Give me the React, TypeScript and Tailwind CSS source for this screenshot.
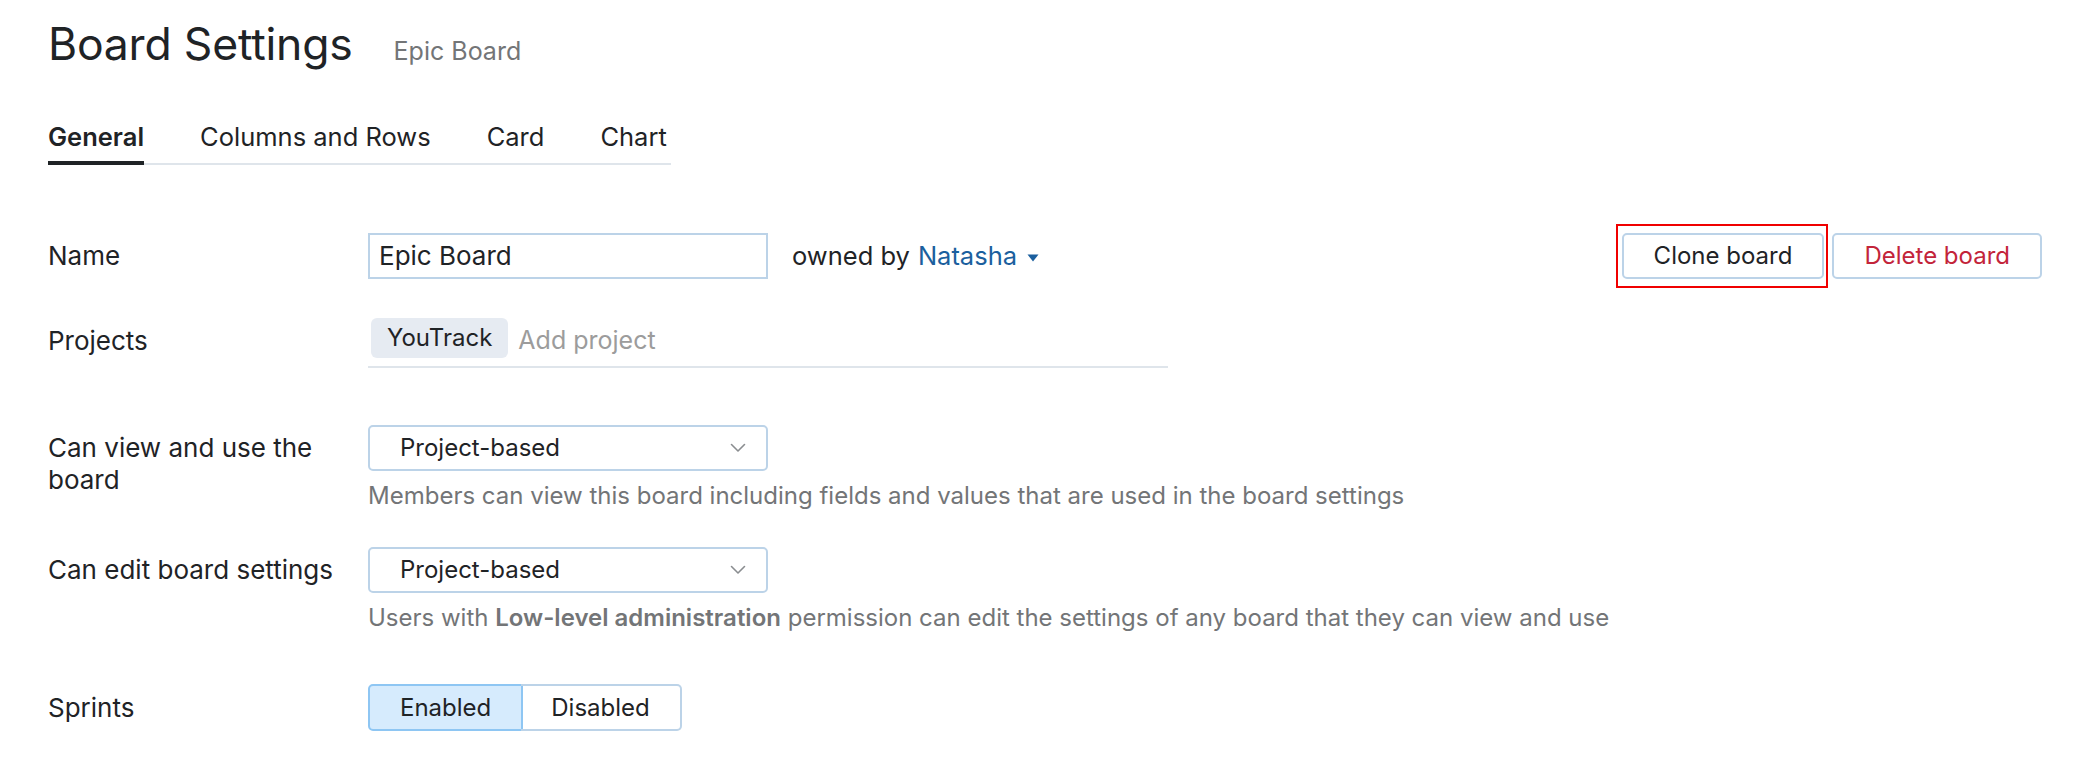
import React from "react";

const Chevron = () => (
  <svg width="16" height="10" viewBox="0 0 16 10" fill="none" className="shrink-0">
    <path d="M1.5 1.5 L8 8 L14.5 1.5" stroke="#8a8d90" strokeWidth="1.6" strokeLinecap="round" strokeLinejoin="round" />
  </svg>
);

const Select = ({ value }: { value: string }) => (
  <div className="flex h-[46px] w-[400px] items-center justify-between rounded-[5px] border-2 border-[#bcd3e8] pl-[30px] pr-[20px] text-[24px] text-[#1f2326]">
    <span>{value}</span>
    <Chevron />
  </div>
);

export default function App() {
  return (
    <div
      className="min-h-[772px] w-[2090px] bg-white px-12 text-[26px] leading-[32px] text-[#1f2326]"
      style={{ fontFamily: "Inter, 'Noto Sans', sans-serif" }}
    >
      <div className="flex items-baseline pt-[18px]">
        <h1 className="text-[44.5px] leading-[53px] font-normal tracking-[-0.2px]">Board Settings</h1>
        <span className="ml-[41px] text-[25px] text-[#737577]">Epic Board</span>
      </div>

      <div className="mt-[50px] inline-flex gap-[56px] border-b-2 border-[#dfe5eb] pr-1 text-[25.5px]">
        <div className="relative pb-[10px] font-semibold">
          General
          <div className="absolute -bottom-[2px] left-0 right-0 h-[4px] bg-[#1f2326]" />
        </div>
        <div className="pb-[10px]">Columns and Rows</div>
        <div className="pb-[10px]">Card</div>
        <div className="pb-[10px]">Chart</div>
      </div>

      <div className="mt-[68px] flex items-center">
        <div className="w-[320px]">Name</div>
        <div className="flex h-[46px] w-[400px] items-center border-2 border-[#bcd3e8] pl-[9px]">Epic Board</div>
        <div className="ml-[24px] flex items-center text-[25.5px]">
          <span>owned by</span>
          <span className="ml-[8px] text-[#1b5f9e]">Natasha</span>
          <svg width="12" height="8" viewBox="0 0 12 8" className="ml-[10px] mt-[3px]">
            <path d="M0.5 0.5 L11.5 0.5 L6 7.5 Z" fill="#1b5f9e" />
          </svg>
        </div>
        <div className="ml-auto flex items-center gap-2">
          <div className="relative">
            <button className="h-[46px] rounded-[5px] border-2 border-[#bcd3e8] bg-white px-[30px] text-[24px] text-[#1f2326]">
              Clone board
            </button>
            <div className="pointer-events-none absolute -bottom-[9px] -left-[6px] -right-[4px] -top-[9px] border-2 border-[#f00000]" />
          </div>
          <button className="h-[46px] rounded-[5px] border-2 border-[#bcd3e8] bg-white px-[30px] text-[24px] text-[#c3243a]">
            Delete board
          </button>
        </div>
      </div>

      <div className="mt-[35px] flex items-center">
        <div className="w-[320px]">Projects</div>
        <div className="flex w-[800px] items-center border-b-2 border-[#dfe5eb] pb-[8px] pl-[3px] pt-[4px]">
          <span className="flex h-[40px] items-center rounded-[6px] bg-[#e6ebf2] px-[16px] text-[24px]">YouTrack</span>
          <span className="ml-[10px] mt-[4px] text-[25px] text-[#9c9c9c]">Add project</span>
        </div>
      </div>

      <div className="mt-[57px] flex items-start">
        <div className="w-[300px] pt-[7px]">Can view and use the board</div>
        <div className="ml-[20px]">
          <Select value="Project-based" />
          <div className="mt-[9px] text-[24px] text-[#737577]">
            Members can view this board including fields and values that are used in the board settings
          </div>
        </div>
      </div>

      <div className="mt-[35px] flex items-start">
        <div className="w-[300px] pt-[7px]">Can edit board settings</div>
        <div className="ml-[20px]">
          <Select value="Project-based" />
          <div className="mt-[9px] text-[24px] text-[#737577]">
            Users with <span className="font-semibold">Low-level administration</span> permission can edit the
            settings of any board that they can view and use
          </div>
        </div>
      </div>

      <div className="mt-[50px] flex items-center pb-8">
        <div className="w-[320px]">Sprints</div>
        <div className="flex h-[47px] text-[24px]">
          <div className="flex items-center rounded-l-[5px] border-2 border-[#8ec6f3] bg-[#d6ebfd] px-[30px]">Enabled</div>
          <div className="-ml-[2px] flex items-center rounded-r-[5px] border-2 border-l-0 border-[#bcd3e8] px-[30px]">
            Disabled
          </div>
        </div>
      </div>
    </div>
  );
}
